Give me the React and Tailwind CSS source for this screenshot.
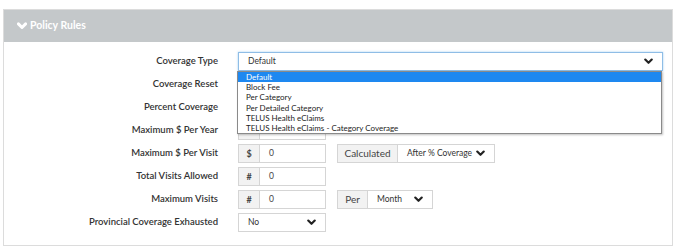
const options = [
  'Default',
  'Block Fee',
  'Per Category',
  'Per Detailed Category',
  'TELUS Health eClaims',
  'TELUS Health eClaims - Category Coverage',
];

function Chevron({ className = '', weight = 2.2 }) {
  return (
    <svg viewBox="0 0 10 7" className={className} fill="none">
      <polyline points="1.4,1.4 5,5 8.6,1.4" stroke="currentColor" strokeWidth={weight} strokeLinecap="round" strokeLinejoin="round" />
    </svg>
  );
}

function Select({ value, className = '', focused = false }) {
  return (
    <div
      className={`flex items-center justify-between h-[19px] bg-white border px-[9px] ${
        focused ? 'border-[#8fbde6] shadow-[0_0_2px_rgba(102,175,233,0.6)]' : 'border-[#d5d5d5]'
      } ${className}`}
    >
      <span className="text-[8.5px] text-[#333]">{value}</span>
      <Chevron className="w-[9px] h-[7px] text-[#222]" weight={2.4} />
    </div>
  );
}

function Addon({ children, className = '' }) {
  return (
    <div className={`flex items-center justify-center h-full bg-[#f2f2f2] border-r border-[#d5d5d5] text-[#444] ${className}`}>
      {children}
    </div>
  );
}

function InputGroup({ sign, value }) {
  return (
    <div className="flex h-[19px] w-[88px] border border-[#d5d5d5] bg-white">
      <Addon className="w-[21px] text-[9px] font-bold">{sign}</Addon>
      <div className="flex items-center pl-[9px] text-[8.5px] text-[#444]">{value}</div>
    </div>
  );
}

function Row({ label, children }) {
  return (
    <div className="flex items-center h-[19px]">
      <div className="w-[214px] text-right text-[9.5px] font-semibold text-[#333]">{label}</div>
      <div className="ml-[20px] flex items-center gap-[11px]">{children}</div>
    </div>
  );
}

export default function App() {
  return (
    <div className="w-[677px] h-[252px] bg-white pt-[9px] pl-[3px] pr-[4px] font-['Lato','Liberation_Sans',sans-serif]">
      <div className="border border-[#dcdcdc] h-[237px] relative">
        <div className="h-[32px] bg-[#c4c8ca] flex items-center pl-[13px] gap-[3px] text-white">
          <Chevron className="w-[10px] h-[8px]" weight={3} />
          <span className="text-[10.5px] font-bold">Policy Rules</span>
        </div>
        <div className="pt-[10px] flex flex-col gap-[4px]">
          <Row label="Coverage Type">
            <Select value="Default" focused className="w-[425px]" />
          </Row>
          <Row label="Coverage Reset">
            <div className="w-[88px] h-[19px] border border-[#d5d5d5]" />
          </Row>
          <Row label="Percent Coverage">
            <InputGroup />
          </Row>
          <Row label="Maximum $ Per Year">
            <InputGroup />
          </Row>
          <Row label="Maximum $ Per Visit">
            <InputGroup sign="$" value="0" />
            <div className="flex h-[19px] w-[158px] border border-[#d5d5d5] bg-white">
              <Addon className="w-[60px] text-[10px]">Calculated</Addon>
              <Select value="After % Coverage" className="flex-1 border-0 h-full pr-[9px]" />
            </div>
          </Row>
          <Row label="Total Visits Allowed">
            <InputGroup sign="#" value="0" />
          </Row>
          <Row label="Maximum Visits">
            <InputGroup sign="#" value="0" />
            <div className="flex h-[19px] w-[96px] border border-[#d5d5d5] bg-white">
              <Addon className="w-[30px] text-[10px]">Per</Addon>
              <Select value="Month" className="flex-1 border-0 h-full" />
            </div>
          </Row>
          <Row label="Provincial Coverage Exhausted">
            <Select value="No" className="w-[88px]" />
          </Row>
        </div>
        <div className="absolute left-[233px] top-[61px] w-[425px] bg-white border border-[#8a8a8a] shadow-[1px_1px_2px_rgba(0,0,0,0.25)]">
          {options.map((o, i) => (
            <div
              key={o}
              className={`h-[10.2px] leading-[10.2px] pl-[8px] text-[8px] ${
                i === 0 ? 'bg-[#1e88f0] text-white' : 'text-[#222]'
              }`}
            >
              {o}
            </div>
          ))}
        </div>
      </div>
    </div>
  );
}
